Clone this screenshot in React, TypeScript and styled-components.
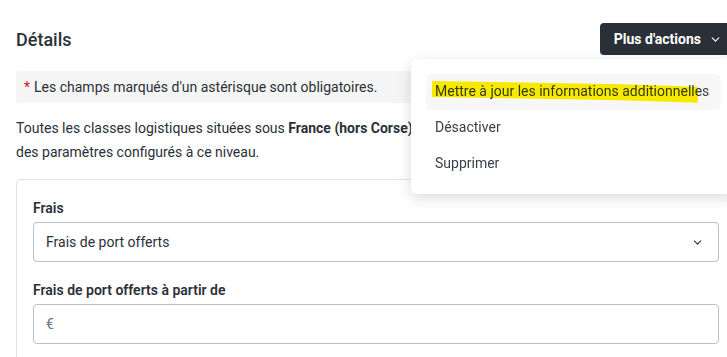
import styled, { createGlobalStyle } from "styled-components";
import { ChevronDown } from "lucide-react";

const menuItems = [
    "Mettre à jour les informations additionnelles",
    "Désactiver",
    "Supprimer",
];

export default function App() {
    return (
        <>
            <GlobalStyle />
            <Page>
                <Header>
                    <Title>Détails</Title>
                    <ActionsWrapper>
                        <ActionsButton>
                            Plus d'actions
                            <ChevronDown size={13} strokeWidth={2} />
                        </ActionsButton>
                        <Menu>
                            {menuItems.map((label, i) => (
                                <MenuItem key={label} active={i === 0}>
                                    {i === 0 && (
                                        <Marker viewBox="0 0 300 34" width="300" height="34">
                                            <path
                                                d="M5 15 C60 15.5, 120 17, 180 18 C220 19, 250 20, 271 21"
                                                stroke="#f7ea00"
                                                strokeWidth="16"
                                                strokeLinecap="butt"
                                                fill="none"
                                            />
                                        </Marker>
                                    )}
                                    <MenuLabel>{label}</MenuLabel>
                                </MenuItem>
                            ))}
                        </Menu>
                    </ActionsWrapper>
                </Header>

                <Notice>
                    <Asterisk>*</Asterisk> Les champs marqués d'un astérisque sont obligatoires.
                </Notice>

                <Intro>
                    Toutes les classes logistiques situées sous <strong>France (hors Corse)</strong> héritent
                    <br />
                    des paramètres configurés à ce niveau.
                </Intro>

                <Card>
                    <Field>
                        <Label>Frais</Label>
                        <Select>
                            <span>Frais de port offerts</span>
                            <ChevronDown size={13} strokeWidth={2} color="#2b3038" />
                        </Select>
                    </Field>
                    <Field>
                        <Label>Frais de port offerts à partir de</Label>
                        <Input>
                            <Currency>€</Currency>
                        </Input>
                    </Field>
                </Card>
            </Page>
        </>
    );
}

const GlobalStyle = createGlobalStyle`
    html, body {
        margin: 0;
        background: #ffffff;
        overflow: hidden;
    }
    body {
        font-family: Roboto, "Liberation Sans", sans-serif;
        color: #2b3038;
        font-size: 14px;
    }
`

const Page = styled.div`
    width: 720px;
    padding: 23px 16px 0 16px;
`

const Header = styled.div`
    display: flex;
    justify-content: space-between;
    align-items: center;
    height: 32px;
`

const Title = styled.h2`
    margin: 0;
    font-size: 18px;
    font-weight: 500;
    color: #2b3038;
`

const ActionsWrapper = styled.div`
    position: relative;
`

const ActionsButton = styled.button`
    display: flex;
    align-items: center;
    gap: 8px;
    height: 32px;
    padding: 0 14px;
    white-space: nowrap;
    border: none;
    border-radius: 4px;
    background: #2a3038;
    color: #ffffff;
    font-family: inherit;
    font-size: 14px;
    font-weight: 700;
`

const Menu = styled.div`
    position: absolute;
    top: 36px;
    right: 0;
    width: 293px;
    padding: 15px 16px 14px 16px;
    background: #ffffff;
    border-radius: 6px;
    box-shadow: 0 4px 14px rgba(30, 35, 45, 0.16);
    display: flex;
    flex-direction: column;
    gap: 2px;
    z-index: 2;
`

const MenuItem = styled.div<{ active: boolean }>`
    position: relative;
    height: 34px;
    display: flex;
    align-items: center;
    padding: 0 8px;
    border-radius: 4px;
    background: ${({ active }) => (active ? "#f7f7f8" : "transparent")};
    box-shadow: ${({ active }) => (active ? "0 1px 3px rgba(0, 0, 0, 0.06)" : "none")};
`

const MenuLabel = styled.span`
    position: relative;
    color: #3a4049;
    font-size: 14px;
    white-space: nowrap;
    mix-blend-mode: multiply;
`

const Marker = styled.svg`
    position: absolute;
    left: 0;
    top: 0;
    pointer-events: none;
`

const Notice = styled.div`
    margin-top: 16px;
    height: 32px;
    display: flex;
    align-items: center;
    gap: 4px;
    padding: 0 8px;
    background: #f5f5f5;
    border-radius: 4px;
    font-size: 14px;
`

const Asterisk = styled.span`
    color: #d0161c;
`

const Intro = styled.p`
    margin: 13px 0 15px 0;
    line-height: 24px;
    font-size: 14px;
    white-space: nowrap;

    strong {
        font-weight: 700;
    }
`

const Card = styled.div`
    border: 1px solid #e1e4e7;
    border-radius: 4px;
    padding: 18px 17px 20px 16px;
    display: flex;
    flex-direction: column;
    gap: 18px;
`

const Field = styled.div`
    display: flex;
    flex-direction: column;
    gap: 4px;
`

const Label = styled.label`
    font-size: 14px;
    font-weight: 600;
    line-height: 20px;
`

const Select = styled.div`
    height: 40px;
    box-sizing: border-box;
    border: 1px solid #b9c0c7;
    border-radius: 4px;
    display: flex;
    align-items: center;
    justify-content: space-between;
    padding: 0 14px 0 12px;
    width: 686px;
    font-size: 14px;
`

const Input = styled(Select)`
    justify-content: flex-start;
`

const Currency = styled.span`
    color: #6b7280;
`
